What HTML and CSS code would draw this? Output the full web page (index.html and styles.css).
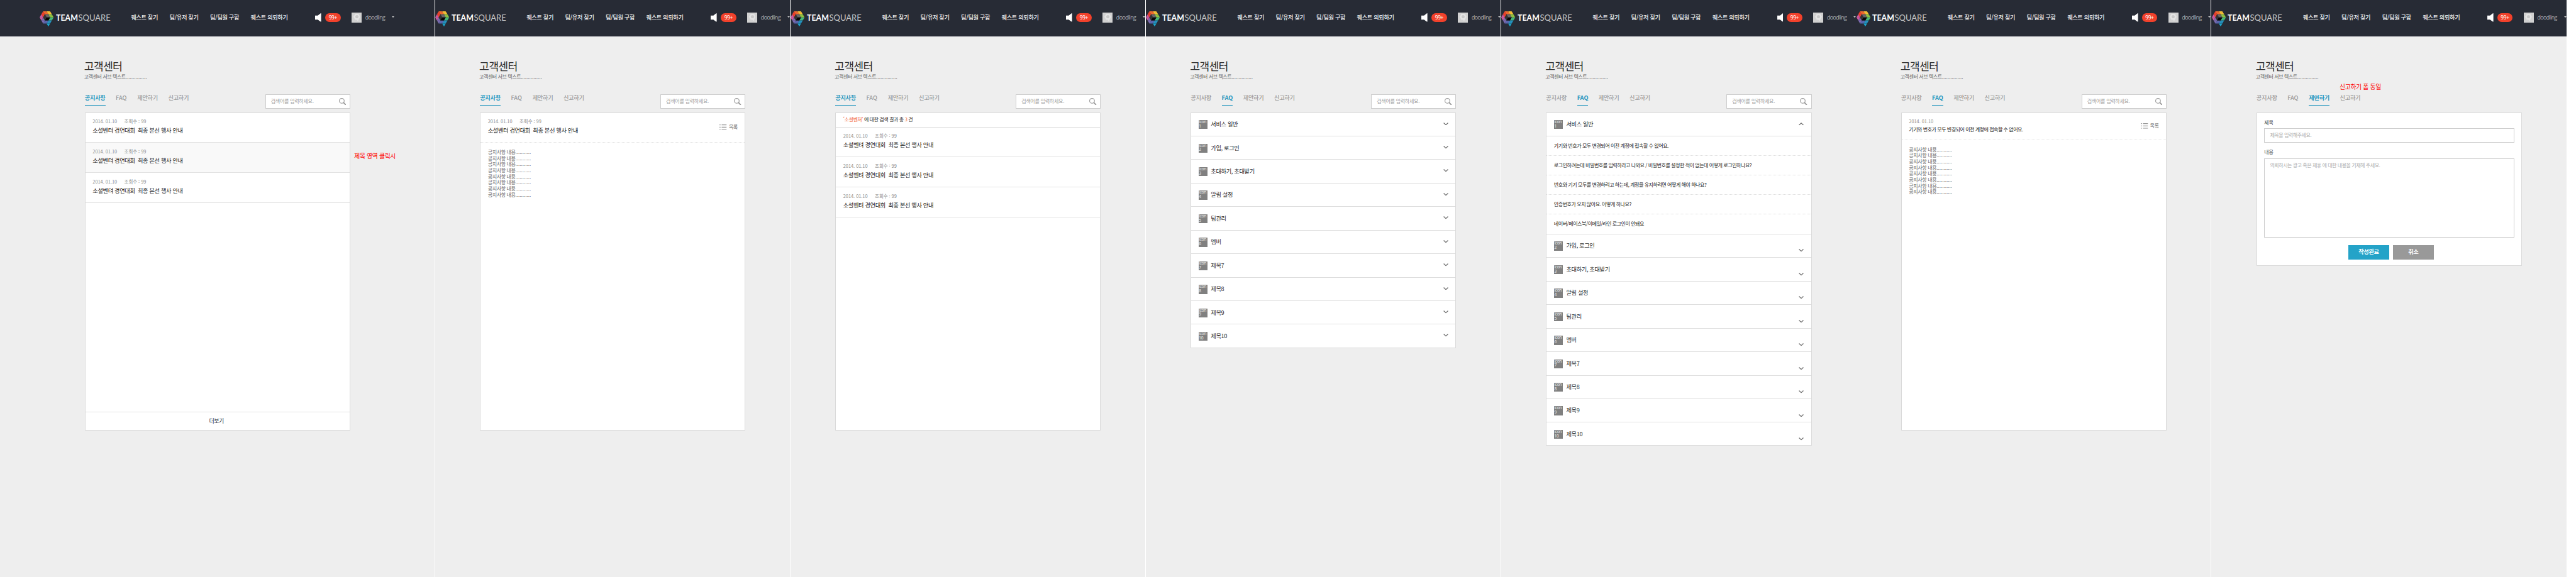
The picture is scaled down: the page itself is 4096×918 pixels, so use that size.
FILE: index.html
```
<!DOCTYPE html>
<html lang="ko">
<head>
<meta charset="utf-8">
<title>TEAMSQUARE 고객센터</title>
<link rel="stylesheet" href="styles.css">
<script src="app.js" defer></script>
</head>
<body>
<svg class="defs" width="0" height="0" aria-hidden="true">
  <symbol id="mark" viewBox="0 0 38.7 42">
    <path fill="#ee402c" d="M4.8 8.4 9.7 0l4.8 8.4L9.7 17z"/>
    <path fill="#f26a2d" d="M9.7 0h9.6l4.9 8.4h-9.7z"/>
    <path fill="#f7bf36" d="M19.3 0H29l4.8 8.4h-9.6z"/>
    <path fill="#8fc440" d="M24.2 8.4h9.6l4.9 8.6H29z"/>
    <path fill="#45b97c" d="M29 17h9.7l-4.9 8.3h-9.6z"/>
    <path fill="#2492c0" d="M24.2 25.3h9.6L29 33.7h-9.7z"/>
    <path fill="#1ba5cc" d="M19.3 33.7H29L24.3 42z"/>
    <path fill="#5a67b0" d="M14.5 25.3h9.7l-4.9 8.4H9.7z"/>
    <path fill="#7c6bb0" d="M4.8 25.3 9.7 17l4.8 8.3-4.8 8.4z"/>
    <path fill="#cc5aa0" d="M0 17l4.8-8.6L9.7 17l-4.9 8.3z"/>
    <path fill="#666" d="M14.5 8.4h9.7L29 17h-9.7z"/>
    <path fill="#333" d="M14.5 8.4l4.8 8.6-4.8 8.3L9.7 17z"/>
    <path fill="#060606" d="M19.3 17H29l-4.8 8.3h-9.7z"/>
    <path fill="none" stroke="#272b35" stroke-opacity=".3" stroke-width=".6" d="M4.8 8.4h29M0 17h9.7M29 17h9.7M4.8 25.3h29M9.7 33.7H29M14.5 8.4 19.3 0M24.2 8.4 29 0M29 17l4.8-8.6M29 17l4.8 8.3M24.2 25.3l4.8 8.4M14.5 25.3l4.8 8.4"/>
  </symbol>
  <symbol id="mark-gray" viewBox="0 0 38.7 42">
    <path fill="#e4e4e4" d="M9.7 0H29l9.7 17-14.4 25-5-8.3H9.7L0 17z"/>
    <path fill="#c9c9c9" d="M14.5 8.4h9.7L29 17l-4.8 8.3h-9.7L9.7 17z"/>
  </symbol>
  <symbol id="speaker" viewBox="0 0 17 24"><path fill="#fff" d="M0 6.5h7.5L14.5.8Q17-1 17 1.5v21Q17 25 14.5 23.2L7.5 18H0z"/></symbol>
  <symbol id="search" viewBox="0 0 20 20"><circle cx="7.7" cy="7.7" r="6.7" fill="none" stroke="#999" stroke-width="2"/><path d="M12.8 12.8l5.6 5.6" stroke="#999" stroke-width="3.2" stroke-linecap="round"/></symbol>
  <symbol id="chevron" viewBox="0 0 14 8"><path d="M1 1l6 5.5L13 1" fill="none" stroke="#6e6e6e" stroke-width="2.2"/></symbol>
  <symbol id="list" viewBox="0 0 20 15"><path fill="#999" d="M0 0h3v2H0zM6 0h14v2H6zM0 6.500h3v2H0zM6 6.500h14v2H6zM0 13h3v2H0zM6 13h14v2H6z"/></symbol>
</svg>

<template id="topbar">
  <a class="logo" href="#">
    <svg class="logo-mark"><use href="#mark"/></svg>
    <svg class="logo-word"><text class="word-team" x="0" y="20.5" textLength="60.5" lengthAdjust="spacingAndGlyphs">TEAM</text><text class="word-square" x="61.5" y="20.5" textLength="89" lengthAdjust="spacingAndGlyphs">SQUARE</text></svg>
  </a>
  <nav class="nav"><a>퀘스트 찾기</a><a>팀/유저 찾기</a><a>팀/팀원 구함</a><a>퀘스트 의뢰하기</a></nav>
  <svg class="speaker"><use href="#speaker"/></svg>
  <span class="badge">99+</span>
  <span class="avatar"><svg><use href="#mark-gray"/></svg></span>
  <span class="user">doodling</span>
  <i class="caret"></i>
</template>

<template id="heading">
  <h1>고객센터</h1>
  <p class="sub">고객센터 서브 텍스트<span class="dots">...............</span></p>
</template>

<template id="searchbox">
  <div class="search"><span>검색어를 입력하세요.</span><svg><use href="#search"/></svg></div>
</template>

<div class="board">
  <section class="panel panel-first">
    <header class="topbar"></header>
    <main>
      <div class="heading"></div>
      <div class="toolbar"><nav class="tabs"><a class="on">공지사항</a><a class="latin">FAQ</a><a>제안하기</a><a>신고하기</a></nav><div class="search-slot"></div></div>
      <div class="card tall">
        <article class="notice"><p class="meta"><span>2014. 01.10</span><span>조회수 : 99</span></p><h2>소셜벤텨 경연대회&nbsp; 최종 본선 행사 안내</h2></article>
        <article class="notice hover"><p class="meta"><span>2014. 01.10</span><span>조회수 : 99</span></p><h2>소셜벤텨 경연대회&nbsp; 최종 본선 행사 안내</h2><b class="memo memo-side">제목 영역 클릭시</b></article>
        <article class="notice"><p class="meta"><span>2014. 01.10</span><span>조회수 : 99</span></p><h2>소셜벤텨 경연대회&nbsp; 최종 본선 행사 안내</h2></article>
        <div class="more">더보기</div>
      </div>
    </main>
  </section>

  <section class="panel">
    <header class="topbar"></header>
    <main>
      <div class="heading"></div>
      <div class="toolbar"><nav class="tabs"><a class="on">공지사항</a><a class="latin">FAQ</a><a>제안하기</a><a>신고하기</a></nav><div class="search-slot"></div></div>
      <div class="card tall">
        <article class="notice dotted"><div><p class="meta"><span>2014. 01.10</span><span>조회수 : 99</span></p><h2>소셜벤텨 경연대회&nbsp; 최종 본선 행사 안내</h2></div><a class="tolist"><svg><use href="#list"/></svg>목록</a></article>
        <div class="body" data-lines="8"></div>
      </div>
    </main>
  </section>

  <section class="panel">
    <header class="topbar"></header>
    <main>
      <div class="heading"></div>
      <div class="toolbar"><nav class="tabs"><a class="on">공지사항</a><a class="latin">FAQ</a><a>제안하기</a><a>신고하기</a></nav><div class="search-slot"></div></div>
      <div class="card tall">
        <p class="result"><em>‘소셜벤쳐’</em> 에 대한 검색 결과 총 <em>3</em> 건</p>
        <article class="notice"><p class="meta"><span>2014. 01.10</span><span>조회수 : 99</span></p><h2>소셜벤텨 경연대회&nbsp; 최종 본선 행사 안내</h2></article>
        <article class="notice"><p class="meta"><span>2014. 01.10</span><span>조회수 : 99</span></p><h2>소셜벤텨 경연대회&nbsp; 최종 본선 행사 안내</h2></article>
        <article class="notice"><p class="meta"><span>2014. 01.10</span><span>조회수 : 99</span></p><h2>소셜벤텨 경연대회&nbsp; 최종 본선 행사 안내</h2></article>
      </div>
    </main>
  </section>

  <section class="panel">
    <header class="topbar"></header>
    <main>
      <div class="heading"></div>
      <div class="toolbar"><nav class="tabs"><a>공지사항</a><a class="latin on">FAQ</a><a>제안하기</a><a>신고하기</a></nav><div class="search-slot"></div></div>
      <div class="card faq" data-faq="closed"></div>
    </main>
  </section>

  <section class="panel panel-joined">
    <header class="topbar"></header>
    <main>
      <div class="heading"></div>
      <div class="toolbar"><nav class="tabs"><a>공지사항</a><a class="latin on">FAQ</a><a>제안하기</a><a>신고하기</a></nav><div class="search-slot"></div></div>
      <div class="card faq" data-faq="open"></div>
    </main>
  </section>

  <section class="panel">
    <header class="topbar"></header>
    <main>
      <div class="heading"></div>
      <div class="toolbar"><nav class="tabs"><a>공지사항</a><a class="latin on">FAQ</a><a>제안하기</a><a>신고하기</a></nav><div class="search-slot"></div></div>
      <div class="card tall">
        <article class="notice dotted short"><div><p class="meta"><span>2014. 01.10</span></p><h3>기기와 번호가 모두 변경되어 이전 계정에 접속할 수 없어요.</h3></div><a class="tolist"><svg><use href="#list"/></svg>목록</a></article>
        <div class="body" data-lines="8"></div>
      </div>
    </main>
  </section>

  <section class="panel panel-last">
    <header class="topbar"></header>
    <main>
      <div class="heading"></div>
      <div class="toolbar"><nav class="tabs"><a>공지사항</a><a class="latin">FAQ</a><a class="on">제안하기</a><a>신고하기<b class="memo memo-top">신고하기 폼 동일</b></a></nav></div>
      <div class="card form">
        <label>제목</label>
        <div class="field">제목을 입력해주세요.</div>
        <label>내용</label>
        <div class="field area">의뢰하시는 광고 혹은 제휴 에 대한 내용을 기재해 주세요.</div>
        <div class="actions"><span class="btn">작성완료</span><span class="btn cancel">취소</span></div>
      </div>
    </main>
  </section>
</div>
</body>
</html>
```
FILE: app.js
```
const fill = (selector, id) => {
  const source = document.getElementById(id);
  document.querySelectorAll(selector).forEach(el => el.append(source.content.cloneNode(true)));
};
fill('.topbar', 'topbar');
fill('.heading', 'heading');
fill('.search-slot', 'searchbox');

document.querySelectorAll('[data-lines]').forEach(el => {
  el.innerHTML = '<p>공지사항 내용<span class="dots">...........</span></p>'.repeat(Number(el.dataset.lines));
});

const topics = ['서비스 일반', '가입, 로그인', '초대하기, 초대받기', '알림 설정', '팀관리', '멤버', '제목7', '제목8', '제목9', '제목10'];
const questions = [
  '기기와 번호가 모두 변경되어 이전 계정에 접속할 수 없어요.',
  '로그인하려는데 비밀번호를 입력하라고 나와요 / 비밀번호를 설정한 적이 없는데 어떻게 로그인하나요?',
  '번호와 기기 모두를 변경하려고 하는데, 계정을 유지하려면 어떻게 해야 하나요?',
  '인증번호가 오지 않아요. 어떻게 하나요?',
  '네이버/페이스북/이메일/라인 로그인이 안돼요'
];
document.querySelectorAll('[data-faq]').forEach(el => {
  const open = el.dataset.faq === 'open';
  el.classList.toggle('expanded', open);
  el.innerHTML = topics.map((topic, i) => {
    const isOpen = open && i === 0;
    const row = `<div class="topic${isOpen ? ' open' : ''}"><span class="thumb">icon<br>${i + 1}</span><span class="name">${topic}</span><svg class="chevron"><use href="#chevron"/></svg></div>`;
    return row + (isOpen ? `<ul class="questions">${questions.map(q => `<li>${q}</li>`).join('')}</ul>` : '');
  }).join('');
});
```
FILE: styles.css
```
* { box-sizing: border-box; margin: 0; padding: 0; }
html { background: #fff; overflow: hidden; }
body {
  zoom: 0.576;
  font-family: "Noto Sans CJK KR", "Noto Sans", sans-serif;
  color: #2b2b2b;
}
.defs { position: absolute; }
.board { display: flex; width: 7110px; height: 1593px; overflow: hidden; }
.panel { flex: none; width: 981px; background: #eee; border-right: 1px solid #fff; overflow: hidden; }
.panel-first { width: 1201px; }
.panel-joined { width: 980px; border-right: 0; }
.panel-last { width: 980px; border-right: 0; }

.topbar { display: flex; align-items: flex-start; height: 100px; background: #272b35; border-bottom: 2px solid #363945; white-space: nowrap; }
.panel-first .topbar { padding-left: 109px; }
.logo { display: flex; flex: none; width: 252px; padding: 31px 0 0 1px; }
.logo-mark { flex: none; width: 38.7px; height: 42px; }
.logo-word { flex: none; width: 152px; height: 30px; margin: 5px 0 0 5.5px; overflow: visible; font: 24.5px Lato, sans-serif; }
.word-team { fill: #fff; font-weight: 700; }
.word-square { fill: #c6c6c6; font-weight: 400; }
.nav { display: flex; flex: none; width: 509.5px; gap: 32px; padding: 37px 0 0 .5px; font-size: 16px; font-weight: 500; line-height: 24px; letter-spacing: -.6px; color: #f2f2f2; }
.speaker { flex: none; width: 17px; height: 24px; margin: 36px 10px 0 0; }
.badge { flex: none; width: 43px; height: 24px; margin: 36px 30px 0 0; border-radius: 12px; background: #f2412b; color: #fff; font-size: 15px; line-height: 22px; letter-spacing: -.7px; text-align: center; }
.avatar { display: flex; flex: none; justify-content: center; width: 28px; height: 28px; margin-top: 34px; padding-top: 4px; background: #d1d1d1; }
.avatar svg { width: 19px; height: 20.5px; }
.user { flex: none; width: 73px; margin: 36px 0 0 10px; font: 300 15.5px/24px "Open Sans", sans-serif; letter-spacing: -.8px; color: #e4e4e4; }
.caret { flex: none; margin-top: 46px; border: 3.5px solid transparent; border-top: 4px solid #ddd; border-bottom: 0; }

main { width: 857px; padding: 62px 0 0 124px; }
.panel-first main { width: 967px; padding-left: 234px; }
h1 { margin-left: -2px; font-size: 30px; font-weight: 400; line-height: 40px; letter-spacing: -1.3px; }
.sub { height: 58px; margin-left: -2px; font-size: 14px; line-height: 21px; letter-spacing: -.8px; color: #666; }
.dots { letter-spacing: 0; }
.toolbar { display: flex; justify-content: space-between; height: 50px; }
.tabs { display: flex; gap: 28.8px; height: 31px; font-size: 16px; font-weight: 500; line-height: 20px; letter-spacing: -.5px; color: #999; }
.tabs a { position: relative; height: 31px; }
.tabs .latin { width: 30.5px; letter-spacing: 0; }
.tabs .on { border-bottom: 2px solid #2496bf; color: #2496bf; font-weight: 700; }
.search { display: flex; justify-content: space-between; width: 235px; height: 40px; padding: 0 10px 0 14px; border: 1px solid #ccc; background: #fff; color: #999; font-size: 14px; line-height: 36px; letter-spacing: -.5px; }
.search svg { width: 20px; height: 20px; margin-top: 9px; }

.card { width: 733px; background: #fff; border: 1px solid #dadada; }
.tall { display: flex; flex-direction: column; height: 880px; }
.notice { position: relative; display: flex; flex-direction: column; flex: none; height: 83px; padding: 13px 20px 0; border-bottom: 1px solid #e2e2e2; }
.hover { background: #f9f9f9; }
.dotted { flex-direction: row; justify-content: space-between; border-bottom-style: dotted; }
.short { height: 75px; }
.meta { display: flex; gap: 20px; font-size: 13px; line-height: 22px; color: #8c8c8c; letter-spacing: -.1px; }
h2 { padding-top: 3px; font-size: 16px; font-weight: 400; line-height: 24px; letter-spacing: -.6px; color: #222; }
h3 { font-size: 14px; font-weight: 400; line-height: 22px; letter-spacing: -.87px; color: #222; }
.tolist { display: flex; gap: 5px; padding-top: 15px; font-size: 14px; line-height: 22px; letter-spacing: -.7px; color: #666; }
.tolist svg { width: 20px; height: 15px; margin-top: 4px; }
.short .tolist { padding-top: 12px; }
.body { padding: 17px 20px; font-size: 14px; line-height: 16.8px; letter-spacing: -.7px; color: #666; }
.more { margin-top: auto; height: 51px; padding-right: 6px; border-top: 1px solid #e2e2e2; text-align: center; font-size: 15.5px; line-height: 48px; letter-spacing: -.6px; }
.result { flex: none; height: 40px; padding-left: 20px; border-bottom: 1px solid #dedede; font-size: 14px; line-height: 36px; letter-spacing: -.8px; }
.result em { font-style: normal; color: #f2693c; }

.memo { position: absolute; white-space: nowrap; font-size: 17px; font-weight: 400; line-height: 24px; letter-spacing: -.5px; color: #f00; }
.memo-side { left: 742px; top: 25px; }
.memo-top { left: -1px; top: -30px; }

.topic { display: flex; align-items: flex-start; height: 65px; padding: 20px 20px 0; border-bottom: 1px solid #dedede; }
.topic:last-child { border-bottom: 0; }
.faq { height: 651px; }
.expanded { height: 921px; }
.thumb { width: 24px; height: 25px; padding-left: 1px; background: #808080; color: #f2f2f2; font: 400 11.5px/12px "Open Sans", sans-serif; letter-spacing: -.5px; }
.name { flex: 1; padding-left: 10px; font-size: 16px; line-height: 22px; letter-spacing: -.6px; }
.chevron { width: 14px; height: 8px; margin-top: 6px; }
.expanded .chevron { margin-top: 21px; }
.expanded .open .chevron { margin-top: 6px; transform: scaleY(-1); }
.questions { list-style: none; border-bottom: 1px solid #dedede; }
.questions li { height: 54px; padding-left: 20px; border-bottom: 1px dotted #ddd; font-size: 14px; line-height: 51px; letter-spacing: -.84px; color: #222; }
.questions li:last-child { height: 53px; border-bottom: 0; }

.form { height: 425px; padding: 16px 20px 0; }
.form label { display: block; height: 27px; font-size: 14px; line-height: 20px; letter-spacing: -.6px; color: #444; }
.field { width: 691px; height: 39px; margin-bottom: 16px; padding-left: 14px; border: 1px solid #ccc; font-size: 14px; line-height: 34px; letter-spacing: -.85px; color: #aaa; }
.area { height: 220px; margin-bottom: 20px; }
.actions { display: flex; justify-content: center; gap: 10px; padding-left: 10px; }
.btn { width: 113px; height: 40px; background: #24a3c8; color: #fff; font-size: 16px; font-weight: 700; line-height: 37px; letter-spacing: -.7px; text-align: center; }
.cancel { background: #999; }
```
